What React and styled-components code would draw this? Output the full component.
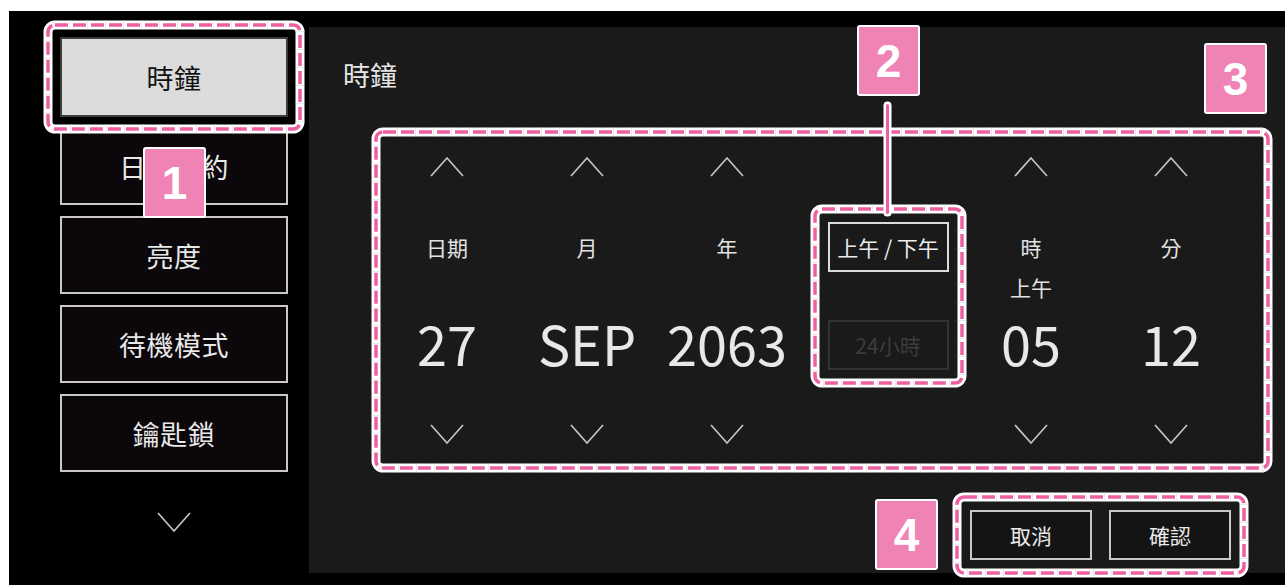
import React from 'react';
import styled, { createGlobalStyle } from 'styled-components';

const GlobalStyle = createGlobalStyle`
	html, body {
		margin: 0;
		padding: 0;
		background: #ffffff;
	}
	body {
		font-family: "Noto Sans CJK TC", "Noto Sans", sans-serif;
	}
`;

const PINK = '#ee5fa2';

const Screen = styled.div`
	position: relative;
	display: flex;
	margin: 11px 0 0 9px;
	width: 1276px;
	height: 574px;
	background: #000;
	overflow: hidden;
`;

const Sidebar = styled.nav`
	display: flex;
	flex-direction: column;
	gap: 11px;
	width: 300px;
	padding: 26px 0 0 51px;
	box-sizing: border-box;
`;

const MenuButton = styled.div`
	position: relative;
	display: flex;
	align-items: center;
	justify-content: center;
	width: 228px;
	height: ${props => props.$active ? 80 : 78}px;
	margin-bottom: ${props => props.$active ? -1 : 0}px;
	box-sizing: border-box;
	border: 2px solid ${props => props.$active ? '#3c3c3c' : '#c8c8c8'};
	background: ${props => props.$active ? '#dcdcdc' : '#0b070a'};
	color: ${props => props.$active ? '#111' : '#e8e8e8'};
	font-size: 27px;
	letter-spacing: 0.5px;
`;

const SideChevron = styled.div`
	display: flex;
	justify-content: center;
	width: 228px;
	margin-top: 29px;
`;

const Panel = styled.main`
	display: flex;
	flex-direction: column;
	flex: 1;
	margin: 16px 0 12px;
	padding: 28px 12px 0 34px;
	background: #1a1a1a;
	box-sizing: border-box;
`;

const Title = styled.h2`
	margin: 0;
	height: 40px;
	line-height: 40px;
	font-size: 27px;
	font-weight: 400;
	color: #e6e6e6;
`;

const Picker = styled.section`
	position: relative;
	display: flex;
	align-items: flex-start;
	margin: 32px 0 0 28px;
	padding-left: 6px;
	width: 902px;
	height: 346px;
	box-sizing: border-box;
`;

const Column = styled.div`
	display: flex;
	flex-direction: column;
	align-items: center;
	width: 140px;
	padding-top: 28px;
	box-sizing: border-box;
`;

const Label = styled.div`
	margin-top: 50px;
	height: 40px;
	line-height: 40px;
	font-size: 21px;
	color: #e2e2e2;
`;

const SubLabel = styled.div`
	height: 40px;
	line-height: 40px;
	font-size: 21px;
	color: #e2e2e2;
`;

const Value = styled.div`
	margin-top: 6px;
	height: 60px;
	line-height: 60px;
	font-size: 54px;
	color: #e8e8e8;
	white-space: nowrap;
`;

const DownSlot = styled.div`
	margin-top: 51px;
	height: 22px;
`;

const ModeColumn = styled.div`
	display: flex;
	align-items: flex-start;
	justify-content: center;
	width: 164px;
	padding: 95px 0 0 18px;
	box-sizing: border-box;
`;

const ModeGroup = styled.div`
	position: relative;
	display: flex;
	flex-direction: column;
	gap: 48px;
	width: 121px;
`;

const ModeBox = styled.div`
	display: flex;
	align-items: center;
	justify-content: center;
	height: 50px;
	box-sizing: border-box;
	border: 2px solid ${props => props.$dim ? '#333' : '#dcdcdc'};
	color: ${props => props.$dim ? '#3c3c3c' : '#ececec'};
	font-size: 21px;
	white-space: nowrap;
`;

const Footer = styled.div`
	display: flex;
	align-items: center;
	justify-content: flex-end;
	gap: 32px;
	margin-top: 26px;
	padding-right: 42px;
`;

const ButtonGroup = styled.div`
	position: relative;
	display: flex;
	gap: 17px;
`;

const ActionButton = styled.div`
	display: flex;
	align-items: center;
	justify-content: center;
	width: 122px;
	height: 50px;
	box-sizing: border-box;
	border: 2px solid #c8c8c8;
	background: #141414;
	color: #eaeaea;
	font-size: 21px;
`;

const Badge = styled.div`
	position: ${props => props.$inline ? 'static' : 'absolute'};
	left: ${props => props.$x}px;
	top: ${props => props.$y}px;
	display: flex;
	align-items: center;
	justify-content: center;
	flex-shrink: 0;
	width: 63px;
	height: 71px;
	box-sizing: border-box;
	border: 2px solid #fff;
	border-radius: 3px;
	background: #f083b5;
	color: #fff;
	font-family: "Liberation Sans", Arial, sans-serif;
	font-weight: 700;
	font-size: 46px;
	z-index: 5;
`;

const Connector = styled.div`
	position: absolute;
	left: 877px;
	top: 93px;
	width: 3px;
	height: 110px;
	background: ${PINK};
	border-radius: 2px;
	box-shadow: 0 0 0 2.5px #fff;
	z-index: 4;
`;

const FrameSvg = styled.svg`
	position: absolute;
	left: ${props => -props.$inset}px;
	top: ${props => -props.$inset}px;
	width: calc(100% + ${props => props.$inset * 2}px);
	height: calc(100% + ${props => props.$inset * 2}px);
	overflow: visible;
	pointer-events: none;
	z-index: 3;
`;

const FrameRect = styled.rect`
	x: 5px;
	y: 5px;
	width: calc(100% - 10px);
	height: calc(100% - 10px);
	rx: 7px;
	ry: 7px;
	fill: none;
`;

function Frame({ inset = 0 }) {
	return (
		<FrameSvg $inset={inset}>
			<FrameRect stroke="#fff" strokeWidth="9" />
			<FrameRect stroke="#d8d8d8" strokeWidth="9" strokeDasharray="1 17" strokeDashoffset="-14" opacity="0.6" />
			<FrameRect stroke={PINK} strokeWidth="3.5" strokeDasharray="13 5" />
		</FrameSvg>
	);
}

function Chevron({ up }) {
	return (
		<svg width="34" height="22" viewBox="0 0 34 22">
			<polyline
				points={up ? '1,21 17,3 33,21' : '1,1 17,19 33,1'}
				fill="none"
				stroke="#c4c4c4"
				strokeWidth="1.7"
			/>
		</svg>
	);
}

const menu = ['時鐘', '日光節約', '亮度', '待機模式', '鑰匙鎖'];

const fields = [
	{ label: '日期', value: '27' },
	{ label: '月', value: 'SEP' },
	{ label: '年', value: '2063' },
	{ mode: true },
	{ label: '時', sub: '上午', value: '05' },
	{ label: '分', value: '12' },
];

export default function App() {
	return (
		<>
			<GlobalStyle />
			<Screen>
				<Sidebar>
					{menu.map((m, i) => (
						<MenuButton key={m} $active={i === 0}>
							{m}
							{i === 0 && <Frame inset={19} />}
						</MenuButton>
					))}
					<SideChevron><Chevron /></SideChevron>
				</Sidebar>

				<Panel>
					<Title>時鐘</Title>
					<Picker>
						<Frame />
						{fields.map((f, i) => f.mode ? (
							<ModeColumn key={i}>
								<ModeGroup>
									<Frame inset={18} />
									<ModeBox>上午 / 下午</ModeBox>
									<ModeBox $dim>24小時</ModeBox>
								</ModeGroup>
							</ModeColumn>
						) : (
							<Column key={i}>
								<Chevron up />
								<Label>{f.label}</Label>
								<SubLabel>{f.sub}</SubLabel>
								<Value>{f.value}</Value>
								<DownSlot><Chevron /></DownSlot>
							</Column>
						))}
					</Picker>
					<Footer>
						<Badge $inline>4</Badge>
						<ButtonGroup>
							<Frame inset={18} />
							<ActionButton>取消</ActionButton>
							<ActionButton>確認</ActionButton>
						</ButtonGroup>
					</Footer>
				</Panel>

				<Badge $x={134} $y={136}>1</Badge>
				<Badge $x={848} $y={14}>2</Badge>
				<Connector />
				<Badge $x={1195} $y={32}>3</Badge>
			</Screen>
		</>
	);
}
